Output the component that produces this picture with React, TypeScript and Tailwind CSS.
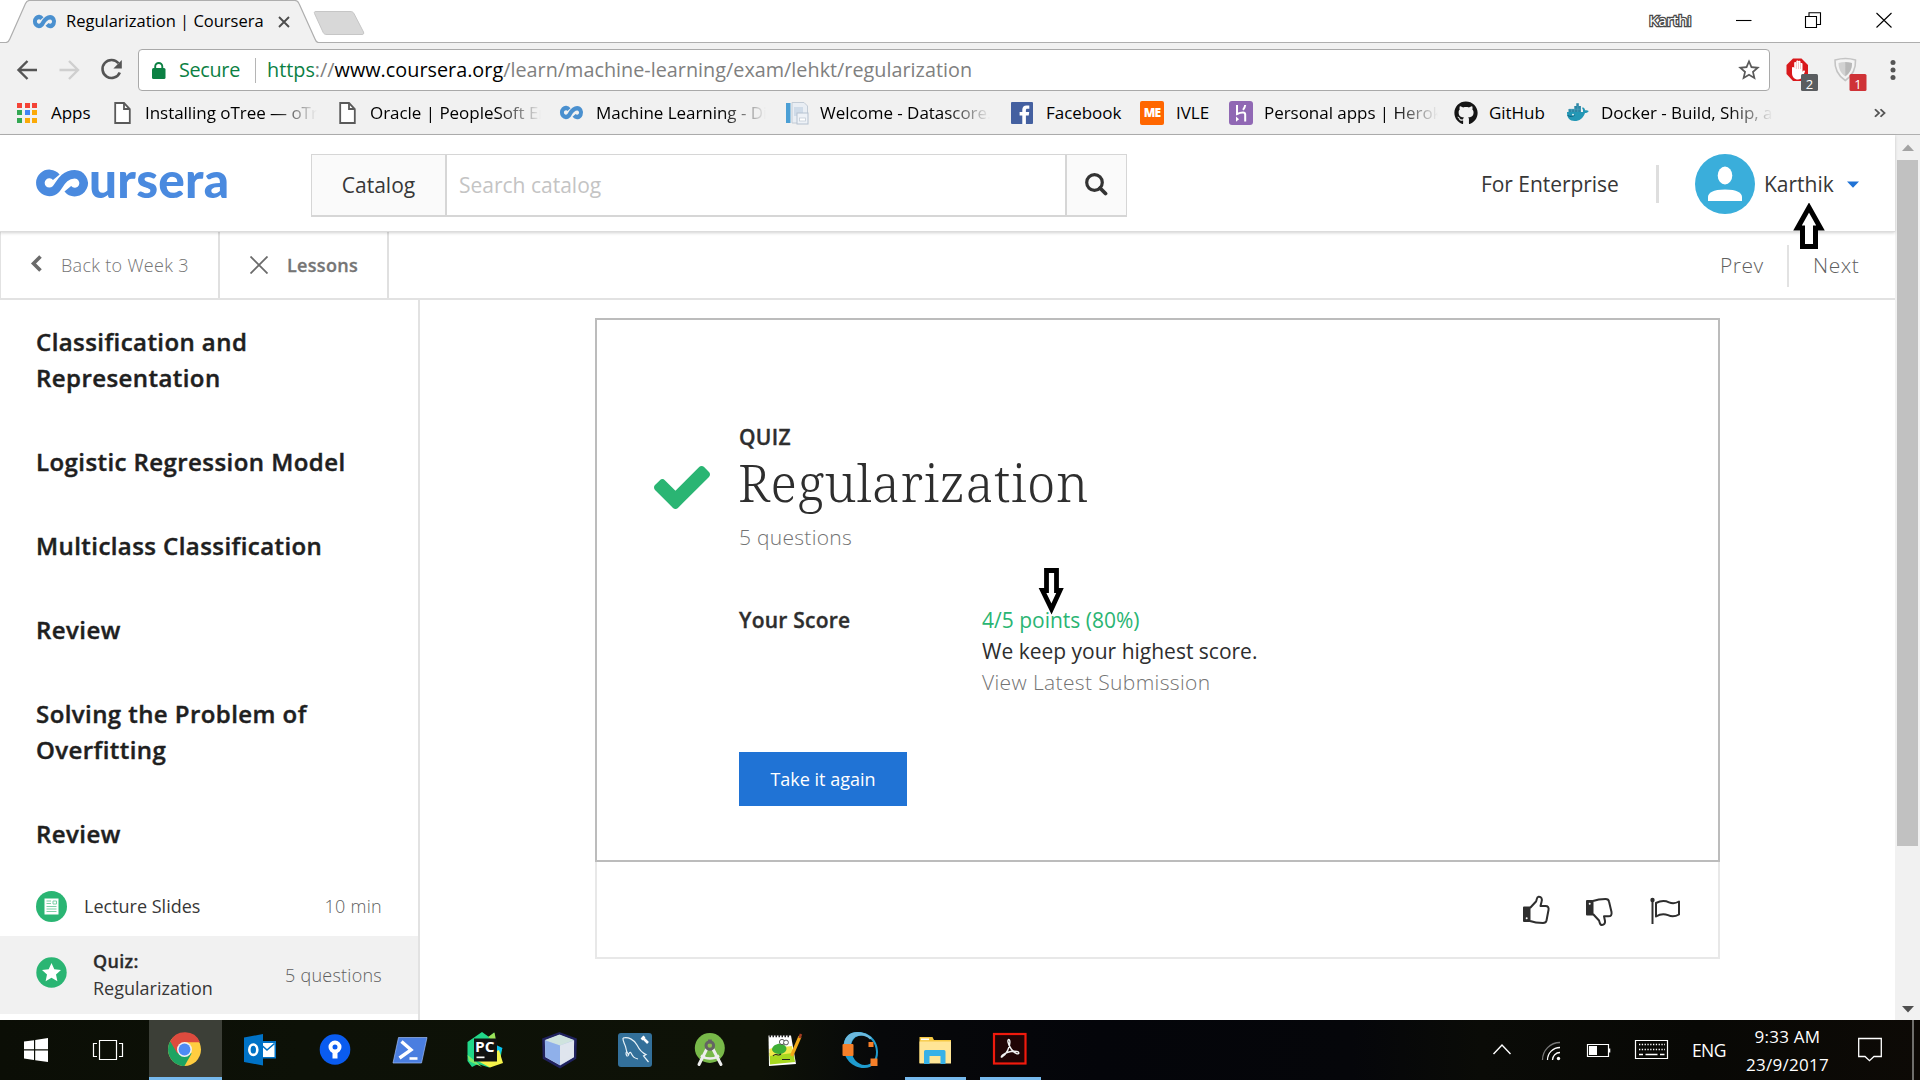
import React from "react";
import { FaGithub } from "react-icons/fa";
import { MdStarBorder } from "react-icons/md";

const CO_PATH = "M20.3 7.2A9 9 0 1 0 19.8 19.2C23.5 15.5 27 4.3 38.7 4.3A8.9 8.9 0 1 1 31.8 18.8";

function CoMark({ w, h, color, stroke }: { w: number; h: number; color: string; stroke: number }) {
  return (
    <svg width={w} height={h} viewBox="0 0 52 26" preserveAspectRatio="none" fill="none" stroke={color} strokeWidth={stroke} className="shrink-0 overflow-visible">
      <path d={CO_PATH} />
    </svg>
  );
}

function PageIcon() {
  return (
    <svg width="17" height="22" viewBox="0 0 17 22" fill="#fff" stroke="#5a5a5a" strokeWidth="1.8">
      <path d="M1.2 1H10L15.8 7V21H1.2Z" />
      <path d="M10 1V7H15.8" fill="none" />
    </svg>
  );
}

function AppsGrid() {
  const colors = ["#f44336", "#f44336", "#f44336", "#34a853", "#4285f4", "#fbaa07", "#34a853", "#fbaa07", "#fbaa07"];
  return (
    <div className="grid w-[20px] grid-cols-3 gap-x-[2.5px] gap-y-[2.5px]">
      {colors.map((c, i) => (
        <i key={i} className="block size-[5px]" style={{ backgroundColor: c }} />
      ))}
    </div>
  );
}

function DataIcon() {
  return (
    <svg width="24" height="24" viewBox="0 0 24 24">
      <rect x="1" y="2" width="4.5" height="20" fill="#4b9fd5" />
      <path d="M7 1.5H19L22.5 5V22H7Z" fill="#e9eef4" stroke="#c3ccd6" />
      <rect x="9" y="6" width="9" height="9" fill="#cfdbe8" />
      <rect x="12" y="12" width="11" height="11" fill="#eef2f7" stroke="#b5c1cf" />
      <rect x="14.5" y="17" width="6" height="3" fill="#fff" stroke="#c3ccd6" strokeWidth=".8" />
    </svg>
  );
}

function FacebookIcon() {
  return (
    <svg width="22" height="22" viewBox="0 0 22 22">
      <rect width="22" height="22" rx="1" fill="#4460a0" />
      <path d="M11.3 22V13.4H8.6V10H11.3V7.6C11.3 4.9 13 3.4 15.5 3.4H18.3V6.8H16.4C15.2 6.8 14.9 7.4 14.9 8.3V10H18.2L17.7 13.4H14.9V22Z" fill="#fff" />
    </svg>
  );
}

function HerokuIcon() {
  return (
    <svg width="24" height="24" viewBox="0 0 24 24">
      <rect width="24" height="24" rx="3" fill="#9068b4" />
      <path d="M8 4V13C10 12 12 11.4 14 11.4C16 11.4 16.2 12.5 16.2 13.6V20.5M16.2 4C16 6 15.2 7.4 14 8.8" fill="none" stroke="#fff" strokeWidth="2" />
      <path d="M7 15.6L10 18.2L7 20.8Z" fill="#fff" />
    </svg>
  );
}

function DockerIcon() {
  return (
    <svg width="23" height="20" viewBox="0 0 23 20">
      <path d="M1 9H17C17.2 7.5 17 6.3 16 5L17 4.2C18.4 5 19 6 19.1 7.3C20.3 7 21.7 7.2 22.7 7.9C22 9.4 20.6 10 19 10C17 15.5 13.6 18 8.6 18C3.7 18 .8 15 1 9Z" fill="#2497b5" />
      <path d="M2.5 6H8.3V3H10.3V.3H12.8V3H14.9V9H2.5Z" fill="#2b86a5" />
      <path d="M5.6 6V9M8.6 4V9M11.8 3V9M3 6.200H14.500" stroke="#5fb0c8" strokeWidth=".5" />
      <path d="M1.5 12.5C4 13.8 7 13.6 8.6 12.2" stroke="#0d5f7d" fill="none" />
      <circle cx="7" cy="11.6" r=".9" fill="#fff" />
    </svg>
  );
}

function Bookmark({ icon, label, icoW, textW, fade }: { icon: React.ReactNode; label: string; icoW: number; textW: number; fade?: boolean }) {
  return (
    <div className="flex shrink-0 items-center">
      <div className="shrink-0" style={{ width: icoW }}>{icon}</div>
      <div
        className={
          "overflow-hidden whitespace-nowrap text-[17px] tracking-[-0.04px] text-black " +
          (fade ? "[mask-image:linear-gradient(to_right,black_calc(100%-44px),transparent_100%)]" : "")
        }
        style={{ width: textW }}
      >
        {label}
      </div>
    </div>
  );
}

function TabStrip() {
  return (
    <div className="relative flex h-[43px] shrink-0 items-end bg-white">
      <svg width="1920" height="43" className="absolute inset-0">
        <path d="M0 42.5H6C8 42.5 9 41 9.8 39L25.500 3.500C26.500 1.500 27.500 .5 29.500 .5H295C297 .5 298.200 1.500 299 3.500L315 39C315.800 41.300 316.800 42.500 318.500 42.500H1920V44H0Z" fill="#f1f1f1" />
        <path d="M0 42.5H6C8 42.5 9 41 9.8 39L25.500 3.500C26.500 1.500 27.500 .5 29.500 .5H295C297 .5 298.200 1.500 299 3.500L315 39C315.800 41.300 316.800 42.500 318.500 42.500H1920" fill="none" stroke="#aeaeae" strokeWidth="1.2" />
        <path d="M316 11.500H350C352 11.500 353.300 12 354.200 14L363.500 32C364 33.800 363.500 34.500 362 34.500H327C325 34.500 324 34 323.200 32.500L314.500 13.500C314 12 314.500 11.500 316 11.500Z" fill="#d8d8d8" stroke="#c6c6c6" />
      </svg>
      <div className="relative flex h-[43px] w-full items-center">
        <div className="ml-[33px] w-[33px]"><CoMark w={23} h={13} color="#4a90cf" stroke={9} /></div>
        <div className="w-[211.500px] text-[16.500px] whitespace-nowrap text-black">Regularization | Coursera</div>
        <svg width="12" height="12" viewBox="0 0 12 12" stroke="#4d4d4d" strokeWidth="1.9"><path d="M1 1L11 11M11 1L1 11" /></svg>
        <div className="ml-auto flex items-center pb-[3px]">
          <div className="w-[87px] text-[15.300px] leading-[16px] tracking-[-0.1px] text-white [paint-order:stroke_fill] [-webkit-text-stroke:2.600px_#4a4a4a]">Karthi</div>
          <svg width="156" height="16" viewBox="0 0 156 16" fill="none" stroke="#000" strokeWidth="1.1" className="mr-[28px]">
            <path d="M0 8.500H15.500" />
            <path d="M69.500 4.500H80.500V15.500H69.500ZM73 4V.8H84.500V12.500H81" />
            <path d="M140.500 1L155.500 15.500M155.500 1L140.500 15.500" />
          </svg>
        </div>
      </div>
    </div>
  );
}

function Toolbar() {
  return (
    <div className="flex h-[48px] shrink-0 items-start bg-[#f1f1f1] pt-[6px]">
      <svg width="138" height="42" viewBox="0 0 138 42" fill="none" className="shrink-0">
        <path d="M37 21H19M27.500 12L18.500 21L27.500 30" stroke="#555" strokeWidth="2.400" />
        <path d="M59.500 21H77.500M69 12L78 21L69 30" stroke="#cfcfcf" strokeWidth="2.400" />
        <path d="M118.500 14.300A9 9 0 1 0 119.800 23.500" stroke="#555" strokeWidth="2.600" />
        <path d="M121.800 11V19.400H113.400Z" fill="#555" />
      </svg>
      <div className="flex h-[42px] w-[1632px] items-center rounded-[4px] border border-[#a9a9a9] bg-white pl-[13px]">
        <svg width="14" height="17" viewBox="0 0 14 17" className="shrink-0">
          <rect x="0" y="6" width="13.500" height="11" rx="1.500" fill="#0b8043" />
          <path d="M3.200 7V4.500A3.500 3.500 0 0 1 10.300 4.500V7" fill="none" stroke="#0b8043" strokeWidth="1.900" />
        </svg>
        <div className="ml-[13px] w-[76px] text-[19.800px] tracking-[-0.300px] text-[#0b8043]">Secure</div>
        <div className="h-[25px] w-px bg-[#b5b5b5]" />
        <div className="ml-[11px] text-[19.800px] tracking-[0.015px] whitespace-nowrap text-[#808080]">
          <span className="text-[#0b8043]">https</span>://<span className="text-black">www.coursera.org</span>/learn/machine-learning/exam/lehkt/regularization
        </div>
        <MdStarBorder size={26} className="mr-[7px] ml-auto text-[#5a5a5a]" />
      </div>
      <svg width="150" height="44" viewBox="1770 49 150 44" className="shrink-0">
        <path d="M1793 58.500H1801.500L1808 65V74L1801.500 81H1793L1786.500 74V65Z" fill="#d9191c" />
        <path d="M1792 68V73C1792 77 1794.500 79.500 1798 79.500C1801.500 79.500 1803 76 1805 71.500C1805 70.200 1803.300 70.200 1802.500 72V64C1802.500 62.800 1800.500 62.800 1800.500 64V61.800C1800.500 60.500 1798.500 60.500 1798.500 61.800V61.500C1798.500 60.200 1796.300 60.200 1796.300 61.500V63C1796.300 61.800 1794.200 61.800 1794.200 63V68C1794 66.800 1792 66.800 1792 68Z" fill="#fff" />
        <path d="M1796.300 62V69M1798.500 62V69M1800.500 64V69" stroke="#e8a0a0" strokeWidth=".6" />
        <rect x="1801" y="74" width="17" height="17" rx="1.500" fill="#5a5d60" />
        <text x="1809.500" y="88.500" fontSize="13" textAnchor="middle" fill="#fff" fontFamily="Open Sans">2</text>
        <path d="M1835 60C1842 58 1849 58 1855.500 60C1856 69 1852 76 1845.300 80.500C1838.500 76 1834.500 69 1835 60Z" fill="#f4f4f4" stroke="#c4c4c4" strokeWidth="1.600" />
        <path d="M1838.500 63C1843 61.800 1848 61.800 1852 63C1852 69 1849.500 73.500 1845.300 76.500C1841 73.500 1838.500 69 1838.500 63Z" fill="#d2d2d2" />
        <path d="M1845.300 62V76C1849.500 73.500 1852 69 1852 63Z" fill="#b9b9b9" />
        <rect x="1849.500" y="74" width="17" height="17" rx="1.500" fill="#cf3236" />
        <text x="1858" y="88.500" fontSize="13" textAnchor="middle" fill="#fff" fontFamily="Open Sans">1</text>
        <circle cx="1893" cy="62.500" r="2.500" fill="#555" />
        <circle cx="1893" cy="70" r="2.500" fill="#555" />
        <circle cx="1893" cy="77.500" r="2.500" fill="#555" />
      </svg>
    </div>
  );
}

function BookmarksBar() {
  return (
    <div className="flex h-[44px] shrink-0 items-center border-b border-[#b0b0b0] bg-[#f1f1f1] pl-[17px]">
      <Bookmark icon={<AppsGrid />} label="Apps" icoW={34} textW={63} />
      <Bookmark icon={<PageIcon />} label="Installing oTree — oTree" icoW={31} textW={172} fade />
      <div className="w-[22px]" />
      <Bookmark icon={<PageIcon />} label="Oracle | PeopleSoft Enterprise" icoW={31} textW={171} fade />
      <div className="w-[19px]" />
      <Bookmark icon={<CoMark w={23} h={13} color="#4a90cf" stroke={9} />} label="Machine Learning - Discussions" icoW={36} textW={170} fade />
      <div className="w-[19px]" />
      <Bookmark icon={<DataIcon />} label="Welcome - Datascore.io" icoW={35} textW={170} fade />
      <div className="w-[21px]" />
      <Bookmark icon={<FacebookIcon />} label="Facebook" icoW={35} textW={94} />
      <Bookmark
        icon={<div className="flex size-[24px] items-center justify-center rounded-[2px] bg-[#f60] text-[12px] leading-none font-extrabold tracking-[-0.800px] text-white">ME</div>}
        label="IVLE"
        icoW={36}
        textW={53}
      />
      <Bookmark icon={<HerokuIcon />} label="Personal apps | Heroku" icoW={35} textW={174} fade />
      <div className="w-[16px]" />
      <Bookmark icon={<FaGithub size={24} className="text-[#151515]" />} label="GitHub" icoW={35} textW={77} />
      <Bookmark icon={<DockerIcon />} label="Docker - Build, Ship, and Run" icoW={35} textW={172} fade />
      <svg width="12" height="10" viewBox="0 0 12 12" preserveAspectRatio="none" fill="none" stroke="#555" strokeWidth="2" className="ml-[101px]">
        <path d="M1 1.500L5 6L1 10.500M6.500 1.500L10.500 6L6.500 10.500" />
      </svg>
    </div>
  );
}

function SiteHeader() {
  return (
    <header className="relative z-10 flex h-[97px] shrink-0 items-center border-b border-[#dcdcdc] bg-white pl-[36px] text-[21px] text-[#373737] shadow-[0_1px_3px_rgba(0,0,0,0.18)]">
      <div className="flex w-[275px] items-center">
        <CoMark w={52} h={26} color="#4a8adf" stroke={8.6} />
        <span className="-mt-[9px] ml-px font-['Lato'] text-[49.500px] leading-[60px] font-black tracking-[0.250px] text-[#4a8adf]">ursera</span>
      </div>
      <div className="mt-[4px] flex h-[63px] w-[816px] border border-b-2 border-[#d6d6d6]">
        <div className="flex w-[135px] items-center justify-center border-r-2 border-[#d6d6d6] bg-[#fafafa] pt-[2px]">Catalog</div>
        <div className="flex flex-1 items-center pt-[2px] pl-[12px] text-[#c4c4c4]">Search catalog</div>
        <div className="flex w-[61px] items-center justify-center border-l-2 border-[#d6d6d6] bg-[#fafafa]">
          <svg width="24" height="24" viewBox="0 0 24 24" fill="none" stroke="#333" className="mr-[2px] mb-px">
            <circle cx="10.500" cy="10.500" r="7.800" strokeWidth="3.200" />
            <path d="M16 16L21.500 21.500" strokeWidth="3.800" strokeLinecap="round" />
          </svg>
        </div>
      </div>
      <div className="ml-auto w-[175px] pt-[4px] tracking-[-0.050px]">For Enterprise</div>
      <div className="mt-[2px] h-[38px] w-[3px] bg-[#dedede]" />
      <svg width="60" height="60" viewBox="0 0 60 60" className="mt-[2px] ml-[36px]">
        <circle cx="30" cy="30" r="30" fill="#3aaedb" />
        <ellipse cx="30" cy="21.500" rx="7.300" ry="9" fill="#fff" />
        <path d="M13 47V43C13 39 18 35.500 30 35.500C42 35.500 47 39 47 43V47Z" fill="#fff" />
      </svg>
      <div className="ml-[9px] w-[83px] pt-[4px]">Karthik</div>
      <svg width="12" height="7" viewBox="0 0 12 7" className="mt-[2px] mr-[36px]"><path d="M0 .5H12L6 6.800Z" fill="#2073d5" /></svg>
      <svg width="32" height="48" viewBox="0 0 32 48" className="absolute top-[68px] left-[1793px]">
        <path d="M16 4.500L27.500 25H22.500V43.500H9.500V25H4.500Z" fill="#fff" stroke="#000" strokeWidth="5" />
      </svg>
    </header>
  );
}

function LessonNav() {
  return (
    <div className="flex h-[68px] shrink-0 border-b-2 border-l border-[#e2e2e2] bg-white text-[18px] text-[#757575]">
      <div className="flex w-[219px] items-center border-r-2 border-[#e0e0e0] pl-[29px] font-light">
        <svg width="12" height="17" viewBox="0 0 12 17" fill="none" stroke="#6b6b6b" strokeWidth="3.600" className="mb-[3px]"><path d="M10.500 1.500L3.500 8.500L10.500 15.500" /></svg>
        <span className="ml-[19px] tracking-[0.300px]">Back to Week 3</span>
      </div>
      <div className="flex w-[169px] items-center border-r-2 border-[#e0e0e0] pl-[30px]">
        <svg width="18" height="18" viewBox="0 0 18 18" stroke="#6b6b6b" strokeWidth="1.800" className="mb-px"><path d="M.5 .5L17.500 17.500M17.500 .5L.5 17.500" /></svg>
        <span className="ml-[19px] font-semibold tracking-[0.300px] [-webkit-text-stroke:0.300px_#757575]">Lessons</span>
      </div>
      <div className="ml-auto flex items-center pt-[2px] text-[21px] font-light text-[#5f5f5f]">
        <span className="w-[67px] tracking-[0.500px]">Prev</span>
        <div className="h-[42px] w-[2px] bg-[#e2e2e2]" />
        <span className="ml-[24px] w-[82px] tracking-[0.500px]">Next</span>
      </div>
    </div>
  );
}

function Sidebar() {
  return (
    <aside className="flex w-[420px] shrink-0 flex-col border-r-2 border-[#e2e2e2] pt-[24px]">
      <div className="flex flex-col gap-[48px] pl-[36px] text-[24px] leading-[36px] font-semibold tracking-[0.430px] text-[#1f1f1f] [-webkit-text-stroke:0.450px_#1f1f1f]">
        <h3>Classification and<br />Representation</h3>
        <h3>Logistic Regression Model</h3>
        <h3>Multiclass Classification</h3>
        <h3>Review</h3>
        <h3>Solving the Problem of<br />Overfitting</h3>
        <h3>Review</h3>
      </div>
      <div className="mt-[24px] flex h-[60px] items-center pr-[36px] pl-[36px] text-[18px] text-[#373737]">
        <svg width="31" height="31" viewBox="0 0 31 31">
          <circle cx="15.500" cy="15.500" r="15.500" fill="#2ab573" />
          <rect x="8.500" y="7.500" width="14" height="16" fill="#fff" />
          <path d="M10.500 10H15M17 10H20.500V13H17ZM10.500 12.500H15M10.500 15.500H20.500M10.500 18H20.500M10.500 20.500H20.500" stroke="#7fd0a8" fill="none" />
        </svg>
        <span className="ml-[17px]">Lecture Slides</span>
        <span className="ml-auto font-light tracking-[0.300px] text-[#5f5f5f]">10 min</span>
      </div>
      <div className="flex h-[78px] items-center bg-[#f1f1f1] pr-[36px] pl-[36px] text-[18px] leading-[27px] text-[#373737]">
        <svg width="31" height="31" viewBox="0 0 31 31" className="mb-[6px]">
          <circle cx="15.500" cy="15.500" r="15.200" fill="#2ab573" />
          <path d="M15.500 6L18.300 12.300L25 13L20 17.500L21.400 24.200L15.500 20.800L9.600 24.200L11 17.500L6 13L12.700 12.300Z" fill="#fff" />
        </svg>
        <div className="ml-[26px] flex flex-col">
          <span className="font-semibold tracking-[0.300px] text-[#2b2b2b] [-webkit-text-stroke:0.300px_#2b2b2b]">Quiz:</span>
          <span>Regularization</span>
        </div>
        <span className="ml-auto font-light tracking-[0.250px] text-[#5f5f5f]">5 questions</span>
      </div>
    </aside>
  );
}

function FeedbackIcons() {
  return (
    <svg width="160" height="32" viewBox="1521 894 160 32" fill="none" stroke="#2e2e2e" strokeWidth="2" strokeLinejoin="round">
      <path d="M1530 908L1536 901.500C1537 899.500 1536.500 897 1538.500 896.800C1541.500 896.500 1542.500 899 1541.500 902L1540.500 906H1545.500C1548 906 1549 907.500 1548.500 910L1546.500 920.500C1546 922.500 1545 923 1543 923C1538 923 1534 922.500 1530 921" />
      <path d="M1524 907.500H1529.500V921H1524Z" fill="#2e2e2e" />
      <circle cx="1526.700" cy="918.300" r="1" fill="#fff" stroke="none" />
      <path d="M1593 901C1597 899.500 1601 899 1605.500 899C1607.500 899 1608.700 899.500 1609 901.500L1611.500 912C1612 915 1610.800 916.300 1608.500 916.300H1604L1605 921C1605.300 923.500 1604 925 1602 925C1599.500 925 1600 922.500 1599 920.500L1593 914" />
      <path d="M1587 901H1592.500V914.500H1587Z" fill="#2e2e2e" />
      <circle cx="1589.700" cy="903.800" r="1" fill="#fff" stroke="none" />
      <path d="M1652.500 900V924" />
      <circle cx="1652.500" cy="900" r="1.200" fill="#2e2e2e" />
      <path d="M1656 903C1661 900.500 1665 900.500 1669 902.300C1673 904 1675.500 903.500 1679 901.500V914.500C1675.500 916.500 1672 917 1668 915.200C1664 913.500 1660 914 1656 916.500Z" />
    </svg>
  );
}

function QuizCard() {
  return (
    <main className="flex flex-1 pt-[18px] pl-[175px]">
      <div className="flex h-[641px] w-[1125px] flex-col">
        <section className="relative flex h-[544px] shrink-0 border-2 border-[#bcbcbc] pt-[103px] pl-[57px]">
          <svg width="56" height="43" viewBox="121 334 1550 1188" className="mt-[43px] shrink-0">
            <path fill="#2ab573" d="M1671 566q0 40-28 68l-724 724-136 136q-28 28-68 28t-68-28l-136-136-362-362q-28-28-28-68t28-68l136-136q28-28 68-28t68 28l294 295 656-657q28-28 68-28t68 28l136 136q28 28 28 68z" />
          </svg>
          <div className="ml-[29px] flex flex-col items-start text-[21px] text-[#2e2e2e]">
            <div className="leading-[28px] font-semibold tracking-[0.300px] [-webkit-text-stroke:0.350px_#2e2e2e]">QUIZ</div>
            <h1 className="mt-px ml-[-1px] h-[64px] font-['Noto_Serif'] text-[51px] leading-[61px] font-light tracking-[0.620px]">Regularization</h1>
            <div className="mt-[6px] leading-[31px] font-light tracking-[0.280px] text-[#737373]">5 questions</div>
            <div className="mt-[52px] flex leading-[31px]">
              <div className="w-[243px] font-semibold tracking-[0.230px] [-webkit-text-stroke:0.350px_#2e2e2e]">Your Score</div>
              <div className="flex flex-col">
                <span className="text-[#2ab573]">4/5 points (80%)</span>
                <span>We keep your highest score.</span>
                <span className="font-light tracking-[0.370px] text-[#737373]">View Latest Submission</span>
              </div>
            </div>
            <div className="mt-[54px] flex h-[54px] w-[168px] items-center justify-center bg-[#2073d5] text-[18px] text-white">Take it again</div>
          </div>
          <svg width="28" height="48" viewBox="0 0 28 48" className="absolute top-[247px] left-[441px]">
            <path d="M8.500 3.500H18.500V23.500H22L13.500 42L4.500 23.500H8.500Z" fill="#fff" stroke="#000" strokeWidth="4.800" />
          </svg>
        </section>
        <div className="flex h-[97px] items-center justify-end border-2 border-t-0 border-[#e8e8e8] pr-[37px]">
          <FeedbackIcons />
        </div>
      </div>
    </main>
  );
}

function Scrollbar() {
  return (
    <div className="flex w-[25px] shrink-0 flex-col items-center bg-[#f1f1f1]">
      <svg width="12" height="7" viewBox="0 0 12 7" className="mt-[9px]"><path d="M0 7L6 .5L12 7Z" fill="#a3a3a3" /></svg>
      <div className="mt-[9px] h-[686px] w-[21px] bg-[#c1c1c1]" />
      <svg width="12" height="7" viewBox="0 0 12 7" className="mt-auto mb-[7px]"><path d="M0 0H12L6 6.500Z" fill="#505050" /></svg>
    </div>
  );
}

function TaskIcons() {
  return (
    <svg width="1070" height="60" viewBox="0 1020 1070 60" className="shrink-0">
      {/* start button */}
      <path d="M24 1041.500L34 1040.200V1049.300H24ZM35.200 1040L48 1038V1049.300H35.200ZM24 1050.600H34V1060L24 1058.600ZM35.200 1050.600H48V1062L35.200 1060.200Z" fill="#fff" />
      {/* task view */}
      <path d="M99.500 1040.500H116.500V1059.500H99.500ZM97 1043.500H93.500V1056.500H97M119 1043.500H122.500V1056.500H119" fill="none" stroke="#fff" strokeWidth="1.200" />
      {/* chrome */}
      <rect x="149" y="1020" width="73" height="57" fill="#3c3f37" />
      <rect x="149" y="1077" width="73" height="3" fill="#76b9ed" />
      <circle cx="184.500" cy="1049.500" r="16.500" fill="#ffcd40" />
      <path d="M184.500 1049.500L170.200 1041.300A16.500 16.500 0 0 0 184.500 1066L191.600 1053.600Z" fill="#1da462" />
      <path d="M170.200 1041.300A16.500 16.500 0 0 1 200 1042.200H184.500L177.400 1053.500Z" fill="#dd4b3e" />
      <circle cx="184.500" cy="1049.500" r="7.500" fill="#f1f1f1" />
      <circle cx="184.500" cy="1049.500" r="5.900" fill="#4c8bf5" />
      {/* outlook */}
      <rect x="260" y="1041" width="16" height="17.500" fill="#0072c6" />
      <path d="M262.500 1043H274.500V1057H262.500Z" fill="#fff" />
      <path d="M262.500 1046L267 1050L274.500 1043.500" fill="none" stroke="#0072c6" strokeWidth="1.600" />
      <path d="M244 1037.500L263 1034V1065.500L244 1062Z" fill="#0072c6" />
      <ellipse cx="253.300" cy="1049.700" rx="4" ry="5.200" fill="none" stroke="#fff" strokeWidth="2.600" />
      {/* sourcetree */}
      <circle cx="335" cy="1049.500" r="15.300" fill="#0a5cf0" />
      <circle cx="335" cy="1047" r="4.500" fill="none" stroke="#fff" strokeWidth="4" />
      <path d="M332.500 1051H337.500V1058.500H332.500Z" fill="#fff" />
      {/* powershell */}
      <path d="M398.500 1037.500H427L421.500 1063H393Z" fill="#4a7ee0" stroke="#9dbcf5" strokeWidth=".7" />
      <path d="M401.500 1041.500L411 1049.800L399.500 1058" fill="none" stroke="#fff" strokeWidth="3.400" />
      <path d="M409.500 1058.500H417.500" stroke="#fff" strokeWidth="2.600" />
      {/* pycharm */}
      <path d="M467.500 1042L482 1032L489 1037L494 1032.500V1045L502 1049L500 1062L489 1067.500L478 1064L472 1067L467.500 1061Z" fill="#21d789" />
      <path d="M488 1037L494.500 1032.500L496.500 1043Z" fill="#9be35a" />
      <path d="M494 1044L502.500 1048L498 1060Z" fill="#07c3f2" />
      <path d="M476 1060L499 1050L503 1063L490 1067.500Z" fill="#f5f34b" />
      <path d="M467.500 1055L474 1060L482 1067L469 1061Z" fill="#7fe868" />
      <rect x="474" y="1038.500" width="23" height="23" fill="#121212" />
      <text x="475" y="1051.500" fontFamily="Open Sans" fontWeight="700" fontSize="13.500" fill="#fff" textLength="19.500" lengthAdjust="spacingAndGlyphs">PC</text>
      <rect x="476.500" y="1056.500" width="8" height="1.700" fill="#fff" />
      {/* netbeans cube */}
      <path d="M559.500 1033.500L575.500 1039.500L575 1058L560 1067L544 1058L543.500 1039.500Z" fill="#b8c9e8" stroke="#20225e" strokeWidth="2.600" />
      <path d="M559.500 1034.500L574 1040L560 1045.500L545 1040Z" fill="#cfe3de" />
      <path d="M545 1040.500L560 1045.500V1065L545.500 1057Z" fill="#8fb0ea" />
      <path d="M560 1045.500L574 1040.500V1057L560 1065Z" fill="#dfe5ee" />
      {/* mysql workbench */}
      <rect x="618" y="1033" width="34" height="34" rx="3" fill="#33709a" />
      <path d="M623 1038C628 1036.500 634 1039.500 637 1045C639 1049 641 1052.500 646 1054.500L643.500 1056L648.500 1062M623 1038C622.500 1041 624.500 1043 625.500 1046.500C626 1050 627.500 1053.500 628.500 1055C629 1053 630 1051.500 631 1053C633 1057 634 1058 638 1059M627 1051C625.500 1053 626 1055 627.500 1056.500" fill="none" stroke="#e8f2f8" strokeWidth="1.200" />
      <path d="M642 1037L648 1043M641.500 1039.500L644.500 1036.500" stroke="#fff" strokeWidth="2.600" />
      {/* android studio */}
      <circle cx="709.800" cy="1048" r="15" fill="#78b949" />
      <path d="M709.800 1043L699 1064.500M709.800 1043L721 1064.500" stroke="#eee" strokeWidth="3" strokeLinecap="round" />
      <path d="M701 1055.500C706 1059.500 714 1059.500 719 1055.500" stroke="#eee" strokeWidth="2.400" fill="none" />
      <circle cx="709.800" cy="1045.500" r="3.800" fill="#8bc34a" stroke="#646464" strokeWidth="3" />
      <rect x="708" y="1039.500" width="3.800" height="4" fill="#646464" />
      {/* notepad++ */}
      <path d="M768.500 1035.500H791L796 1064L769 1066Z" fill="#fff" />
      <path d="M769.500 1053C777 1050 786 1051 793 1049.500L795 1062L770 1064.500Z" fill="#a7d820" />
      <path d="M769.500 1049C777 1046 787 1047 792 1046L793 1053L769.500 1056Z" fill="#f1e94a" />
      <path d="M772 1050C772 1045 778 1043 782 1044C786 1045 788 1049 785 1052C782 1055 774 1055 772 1050Z" fill="#3fae35" />
      <circle cx="782" cy="1042" r="2.600" fill="#fff" stroke="#333" strokeWidth=".8" />
      <circle cx="786" cy="1042.500" r="2.400" fill="#fff" stroke="#333" strokeWidth=".8" />
      <path d="M769.500 1036H790" stroke="#222" strokeWidth="2.400" strokeDasharray="1.500 1.500" />
      <path d="M773 1056C776 1052 778 1057 781 1054M782 1059.500H790" stroke="#222" fill="none" strokeWidth="1.100" />
      <path d="M791.500 1056L800 1036.500" stroke="#f0a818" strokeWidth="3.200" />
      <path d="M799.500 1038L801 1034" stroke="#a03b22" strokeWidth="2.600" />
      {/* octave */}
      <path fillRule="evenodd" d="M858 1032C870 1032 878 1041 878 1052C878 1062 873 1068 864 1068C852 1068 843.500 1058 843.500 1047C843.500 1038 848.500 1032 858 1032ZM862 1035.500C854.500 1035.500 851 1041 851 1048C851 1057 857 1065 865 1065C872 1065 876 1059.500 876 1052C876 1043 870 1035.500 862 1035.500Z" fill="#1f9ccf" />
      <path d="M844 1044C845 1036 850 1032 858 1032C863 1032 868 1034 872 1038L870 1039.500C867 1036.500 864 1035.500 861 1035.500C855 1035.500 852 1039 851 1044Z" fill="#6cb8dc" />
      <rect x="842.500" y="1044" width="11" height="12" rx="1" fill="#f57f29" />
      <rect x="868.500" y="1042" width="5" height="5" fill="#f57f29" />
      <rect x="870.500" y="1058.500" width="7" height="7.500" fill="#f57f29" />
      {/* file explorer */}
      <path d="M919.500 1037H932.500L934 1040H951V1063H919.500Z" fill="#f6c944" />
      <rect x="919.500" y="1041.500" width="31.500" height="22" fill="#ffe596" />
      <rect x="921" y="1038.500" width="8" height="1.600" fill="#fff" />
      <path d="M924 1064V1051.500Q924 1050 925.500 1050H944Q945.500 1050 945.500 1051.500V1064H940.500V1056H929.500V1064Z" fill="#37b1e8" />
      <rect x="905" y="1077" width="61" height="3" fill="#76b9ed" />
      {/* acrobat */}
      <rect x="994" y="1034" width="31.500" height="29.500" fill="#200405" stroke="#f01a0d" strokeWidth="2.200" />
      <path d="M1002 1057C1006 1054.500 1010.500 1047 1009.800 1041C1009.300 1038.500 1007.500 1039.500 1008 1042C1009 1047 1013 1052.500 1017 1053.800C1019.500 1054.300 1019.500 1052 1017 1051.500C1012 1050.800 1006 1052.500 1002.500 1055C1001 1056.500 1001 1057.500 1002 1057Z" fill="none" stroke="#f2f2f2" strokeWidth="1.400" />
      <rect x="980" y="1077" width="61" height="3" fill="#76b9ed" />
    </svg>
  );
}

function Taskbar() {
  return (
    <div className="flex h-[60px] shrink-0 bg-[linear-gradient(to_right,#0b0e06_0px,#0d1107_300px,#0e1207_760px,#07080a_880px,#04050a_1100px,#05060a_1350px,#0a0b07_1480px,#080805_1700px,#0d0a06_1920px)]">
      <TaskIcons />
      <svg width="240" height="60" viewBox="1480 1020 240 60" fill="none" stroke="#fff" className="ml-[410px] w-[212px] shrink-0" preserveAspectRatio="xMinYMid slice">
        <path d="M1493.500 1054L1502 1045L1510.500 1054" strokeWidth="1.400" />
        <circle cx="1558.500" cy="1058.500" r="1.700" fill="#fff" stroke="none" />
        <path d="M1552.500 1060A7.500 7.500 0 0 1 1560 1052.500M1547.500 1060A12.500 12.500 0 0 1 1560 1047.500" strokeWidth="1.300" />
        <path d="M1542.500 1060A17.500 17.500 0 0 1 1560 1042.500" stroke="#777" strokeWidth="1.300" />
        <path d="M1587.500 1044.500H1608.500V1056.500H1587.500ZM1609.700 1048.500V1052.500" strokeWidth="1.200" />
        <rect x="1589" y="1046" width="8" height="9" fill="#fff" stroke="none" />
        <path d="M1635.500 1040.500H1667.500V1058.500H1635.500Z" strokeWidth="1.200" />
        <path d="M1639 1044.500H1665M1639 1049.500H1665" strokeDasharray="1.300 1.500" strokeWidth="1.300" />
        <path d="M1639 1054.500H1643M1645.500 1054.500H1657.500M1660 1054.500H1664.500" strokeWidth="1.300" />
      </svg>
      <div className="flex w-[54px] items-center pt-px text-[17.500px] tracking-[-0.600px] text-white">ENG</div>
      <div className="flex w-[83px] flex-col items-center pt-[3px] text-[17px] leading-[27.500px] tracking-[0.250px] whitespace-nowrap text-white">
        <span>9:33 AM</span>
        <span>23/9/2017</span>
      </div>
      <svg width="24" height="26" viewBox="0 0 24 26" fill="none" stroke="#fff" strokeWidth="1.300" className="mt-[17px] ml-[29px]">
        <path d="M.7 1.500H23.300V19.500H16L11.500 23.700L7 19.500H.7Z" />
      </svg>
      <div className="ml-auto w-[8px] border-l-2 border-[#6f6f6c]" />
    </div>
  );
}

export default function App() {
  return (
    <div className="flex h-[1080px] w-[1920px] flex-col overflow-hidden bg-white font-['Open_Sans',sans-serif]">
      <TabStrip />
      <Toolbar />
      <BookmarksBar />
      <div className="flex min-h-0 flex-1">
        <div className="flex min-w-0 flex-1 flex-col">
          <SiteHeader />
          <LessonNav />
          <div className="flex min-h-0 flex-1">
            <Sidebar />
            <QuizCard />
          </div>
        </div>
        <Scrollbar />
      </div>
      <Taskbar />
    </div>
  );
}
